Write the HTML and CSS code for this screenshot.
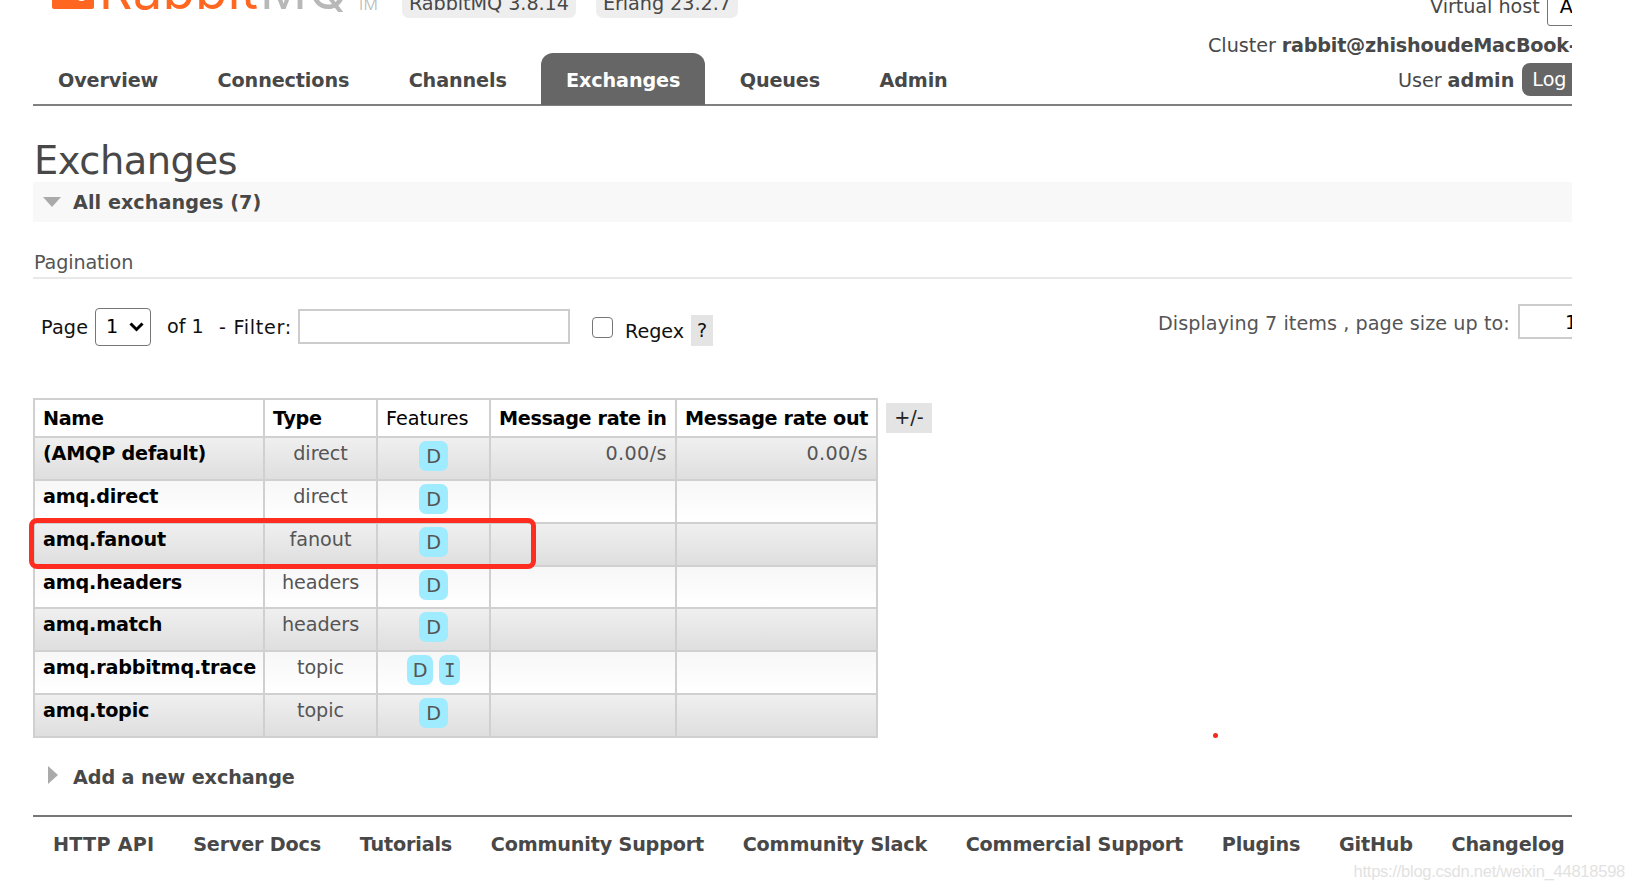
FILE: index.html
```
<!DOCTYPE html>
<html lang="en">
<head>
    <meta charset="UTF-8">
    <title>RabbitMQ Management</title>
    <link rel="stylesheet" href="styles.css">
</head>
<body>
    <div class="page">
        <header class="header">
            <div class="header-left">
                <div class="brand">
                    <svg class="logo" width="350" height="18" viewBox="33 0 350 18">
                        <path d="M52 0H94V7Q94 9 92 9H54Q52 9 52 7Z" fill="#ff6720"/>
                        <ellipse cx="81.500" cy="-1.500" rx="4" ry="2.500" fill="#fff"/>
                        <text class="logo-rabbit" x="99" y="9" textLength="159">Rabbit</text>
                        <text class="logo-mq" x="260" y="9" textLength="88">MQ</text>
                        <text class="logo-tm" x="356" y="9.500" textLength="22">TM</text>
                    </svg>
                    <span class="version">RabbitMQ 3.8.14</span>
                    <span class="version erlang">Erlang 23.2.7</span>
                </div>
                <nav class="tabs">
                    <a class="tab">Overview</a>
                    <a class="tab">Connections</a>
                    <a class="tab">Channels</a>
                    <a class="tab selected">Exchanges</a>
                    <a class="tab">Queues</a>
                    <a class="tab">Admin</a>
                </nav>
            </div>
            <div class="login">
                <div class="login-row vhost">Virtual host <span class="vhost-select">All</span></div>
                <div class="login-row cluster">Cluster <b>rabbit@zhishoudeMacBook-Pro</b></div>
                <div class="login-row user">User <b>admin</b> <span class="logout">Log out</span></div>
            </div>
        </header>

        <main class="main">
            <h1>Exchanges</h1>
            <h2 class="section-bar">
                <svg width="18" height="10" viewBox="0 0 18 10"><path d="M0 0H18L9 10Z" fill="#aaa"/></svg>
                <span>All exchanges (7)</span>
            </h2>
            <h3 class="sub-heading">Pagination</h3>

            <div class="pagination">
                <label class="page-label">Page</label>
                <span class="page-select">1
                    <svg width="15" height="10" viewBox="0 0 15 10"><path d="M1.500 1.500L7.500 7.500L13.500 1.500" fill="none" stroke="#000" stroke-width="3"/></svg>
                </span>
                <span class="page-count">of 1</span>
                <label class="filter-label">- Filter:</label>
                <input class="filter" type="text">
                <span class="checkbox"></span>
                <label class="regex-label">Regex</label>
                <span class="help">?</span>
                <span class="page-size">Displaying 7 items , page size up to:</span>
                <span class="size-input">100</span>
            </div>

            <div class="table-wrap">
                <table class="list">
                    <colgroup><col class="c-name"><col class="c-type"><col class="c-features"><col class="c-in"><col class="c-out"></colgroup>
                    <thead>
                        <tr><th>Name</th><th>Type</th><th class="plain">Features</th><th>Message rate in</th><th>Message rate out</th></tr>
                    </thead>
                    <tbody>
                        <tr><td class="name">(AMQP default)</td><td>direct</td><td><span class="badge">D</span></td><td class="rate">0.00/s</td><td class="rate">0.00/s</td></tr>
                        <tr><td class="name">amq.direct</td><td>direct</td><td><span class="badge">D</span></td><td></td><td></td></tr>
                        <tr><td class="name">amq.fanout</td><td>fanout</td><td><span class="badge">D</span></td><td></td><td></td></tr>
                        <tr class="short"><td class="name">amq.headers</td><td>headers</td><td><span class="badge">D</span></td><td></td><td></td></tr>
                        <tr><td class="name">amq.match</td><td>headers</td><td><span class="badge">D</span></td><td></td><td></td></tr>
                        <tr><td class="name">amq.rabbitmq.trace</td><td>topic</td><td><span class="badge durable">D</span><span class="badge internal">I</span></td><td></td><td></td></tr>
                        <tr><td class="name">amq.topic</td><td>topic</td><td><span class="badge">D</span></td><td></td><td></td></tr>
                    </tbody>
                </table>
                <span class="columns-toggle">+/-</span>
            </div>

            <h2 class="add-new">
                <svg width="10" height="18" viewBox="0 0 10 18"><path d="M0 0V18L10 9Z" fill="#aaa"/></svg>
                <span>Add a new exchange</span>
            </h2>
        </main>

        <footer class="footer">
            <a class="api">HTTP API</a>
            <a>Server Docs</a>
            <a>Tutorials</a>
            <a>Community Support</a>
            <a>Community Slack</a>
            <a>Commercial Support</a>
            <a>Plugins</a>
            <a>GitHub</a>
            <a>Changelog</a>
        </footer>
    </div>

    <div class="highlight"></div>
    <div class="dot"></div>
    <div class="watermark">https://blog.csdn.net/weixin_44818598</div>
</body>
</html>
```
FILE: styles.css
```
* {
    box-sizing: border-box;
}
body {
    margin: 0;
    height: 890px;
    position: relative;
    overflow: hidden;
    background: #fff;
    color: #484848;
    font: 19.2px/24px Verdana, "DejaVu Sans", sans-serif;
    letter-spacing: -0.05px;
}
h1, h2, h3 {
    margin: 0;
}
.page {
    width: 1572px;
    height: 890px;
    padding-left: 33px;
    overflow: hidden;
    white-space: nowrap;
}

/* header */
.header {
    display: flex;
    height: 106px;
    border-bottom: 2px solid #808080;
}
.header-left {
    width: 1165px;
    flex: none;
}
.brand {
    display: flex;
    height: 53px;
}
.logo {
    flex: none;
    width: 350px;
    margin-right: 19px;
}
.logo text {
    font-family: Inter, sans-serif;
    font-size: 52px;
    letter-spacing: 0;
}
.logo .logo-rabbit {
    fill: #ff6720;
}
.logo .logo-mq {
    fill: #b8b8b8;
}
.logo .logo-tm {
    fill: #b8b8b8;
    font-size: 16px;
    font-weight: 300;
}
.version {
    height: 30px;
    margin-top: -12px;
    padding: 4px 7px 0;
    border-radius: 7px;
    background: #eee;
}
.erlang {
    margin-left: 20px;
}
.tabs {
    display: flex;
    gap: 9.4px;
}
.tab {
    height: 52px;
    padding: 0 25px;
    border-radius: 12px 12px 0 0;
    font-weight: bold;
    line-height: 55px;
    letter-spacing: -0.12px;
}
.tab.selected {
    background: #666;
    color: #fff;
}
.login-row {
    height: 35px;
    line-height: 35px;
}
.vhost {
    height: 28px;
    margin-left: 232px;
    line-height: 13px;
}
.vhost-select {
    display: inline-block;
    width: 70px;
    height: 38px;
    margin: -12px 0 0 1px;
    padding-left: 12px;
    border: 1.5px solid #767676;
    border-radius: 3px;
    color: #000;
    line-height: 36px;
    vertical-align: top;
}
.cluster {
    margin-left: 10px;
}
.cluster b {
    letter-spacing: -0.22px;
}
.user {
    margin-left: 200px;
}
.logout {
    display: inline-block;
    height: 33px;
    margin-left: 2px;
    padding: 0 10px;
    border-radius: 8px;
    background: #666;
    color: #fff;
    line-height: 34px;
    vertical-align: top;
}

/* content */
h1 {
    height: 76px;
    padding: 43px 0 0 1px;
    font-size: 38.4px;
    font-weight: normal;
    line-height: 24px;
    letter-spacing: -0.5px;
}
.section-bar {
    display: flex;
    align-items: center;
    gap: 12px;
    height: 40px;
    padding-left: 10px;
    background: #f8f8f8;
    font-size: 19.2px;
    letter-spacing: 0.05px;
}
.section-bar span {
    line-height: 26px;
    padding-top: 1px;
}
.sub-heading {
    height: 57px;
    padding: 29px 0 0 1px;
    border-bottom: 2px solid #e8e8e8;
    color: #555;
    font-size: 19.2px;
    font-weight: normal;
    letter-spacing: -0.15px;
}
.pagination {
    display: flex;
    align-items: flex-start;
    height: 119px;
    padding: 25px 0 0 8px;
    color: #111;
}
.pagination > * {
    flex: none;
}
.page-label {
    width: 54px;
    margin-top: 12px;
    letter-spacing: 0.2px;
}
.page-select {
    display: flex;
    align-items: center;
    justify-content: space-between;
    width: 56px;
    height: 38px;
    margin-top: 4px;
    padding: 0 6px 0 10px;
    border: 1.5px solid #767676;
    border-radius: 4px;
    color: #000;
}
.page-count {
    width: 52px;
    margin: 11px 0 0 16px;
}
.filter-label {
    width: 79px;
    margin-top: 12px;
    letter-spacing: 0.7px;
}
.filter {
    width: 272px;
    height: 35px;
    margin: 5px 0 0;
    padding: 0;
    border: 2px solid #ccc;
}
.checkbox {
    width: 21px;
    height: 21px;
    margin: 13px 12px 0 22px;
    border: 1.5px solid #767676;
    border-radius: 4px;
}
.regex-label {
    width: 66px;
    margin-top: 16px;
}
.help {
    width: 22px;
    height: 31px;
    margin-top: 11px;
    background: #e4e4e4;
    line-height: 31px;
    text-align: center;
}
.page-size {
    width: 360px;
    margin: 8px 0 0 445px;
    color: #555;
    letter-spacing: 0.05px;
}
.size-input {
    width: 100px;
    height: 35px;
    padding-left: 45px;
    border: 2px solid #ccc;
    color: #000;
    line-height: 33px;
}

/* exchanges table */
.table-wrap {
    display: flex;
    align-items: flex-start;
    height: 340px;
}
.list {
    width: 844px;
    flex: none;
    table-layout: fixed;
    border-collapse: collapse;
}
.c-name { width: 230px; }
.c-type { width: 113px; }
.c-features { width: 113px; }
.c-in { width: 186px; }
.c-out { width: 201px; }
.list th, .list td {
    border: 2px solid #d0d0d0;
}
.list th {
    height: 38px;
    padding: 2px 0 0 8px;
    color: #000;
    text-align: left;
    letter-spacing: -0.35px;
}
.list .plain {
    font-weight: normal;
    letter-spacing: 0;
}
.list td {
    height: 43px;
    padding: 4px 8px 0;
    color: #555;
    text-align: center;
    vertical-align: top;
}
.list .short td {
    height: 42px;
}
.list tbody tr {
    background: linear-gradient(#f7f7f7, #fff);
}
.list tbody tr:nth-child(odd) {
    background: linear-gradient(#f0f0f0, #dedede);
}
.list .name {
    color: #000;
    font-weight: bold;
    text-align: left;
    letter-spacing: -0.2px;
}
.list .rate {
    text-align: right;
    letter-spacing: 0.4px;
}
.badge {
    display: inline-block;
    height: 30px;
    margin-top: -1px;
    padding: 0 7px;
    border-radius: 7px;
    background: #9febff;
    line-height: 31px;
    vertical-align: top;
}
.badge.durable {
    padding: 0 6px;
}
.badge.internal {
    width: 21px;
    margin-left: 6px;
    padding: 0 4.5px;
    font-family: "DejaVu Sans Mono", monospace;
}
.columns-toggle {
    width: 46px;
    height: 30px;
    margin: 5px 0 0 8px;
    background: #e4e4e4;
    color: #222;
    line-height: 30px;
    text-align: center;
}
.add-new {
    display: flex;
    gap: 15px;
    height: 77px;
    padding: 28px 0 0 15px;
    font-size: 19.2px;
    line-height: 23px;
    letter-spacing: -0.1px;
}

/* footer */
.footer {
    display: flex;
    gap: 38.7px;
    padding: 16px 0 0 20px;
    border-top: 2px solid #777;
    font-weight: bold;
    letter-spacing: -0.18px;
}
.footer .api {
    letter-spacing: 0.25px;
}

/* annotations over the page */
.highlight {
    position: absolute;
    left: 29px;
    top: 518px;
    width: 507px;
    height: 51px;
    border: 5px solid #ff2d20;
    border-radius: 8px;
}
.dot {
    position: absolute;
    left: 1213px;
    top: 733px;
    width: 5px;
    height: 5px;
    border-radius: 50%;
    background: #f52a1e;
}
.watermark {
    position: absolute;
    right: 9px;
    bottom: 7px;
    color: #e2e2e2;
    font: 16.5px/24px "Liberation Sans", Arial, sans-serif;
    letter-spacing: -0.25px;
}
```
